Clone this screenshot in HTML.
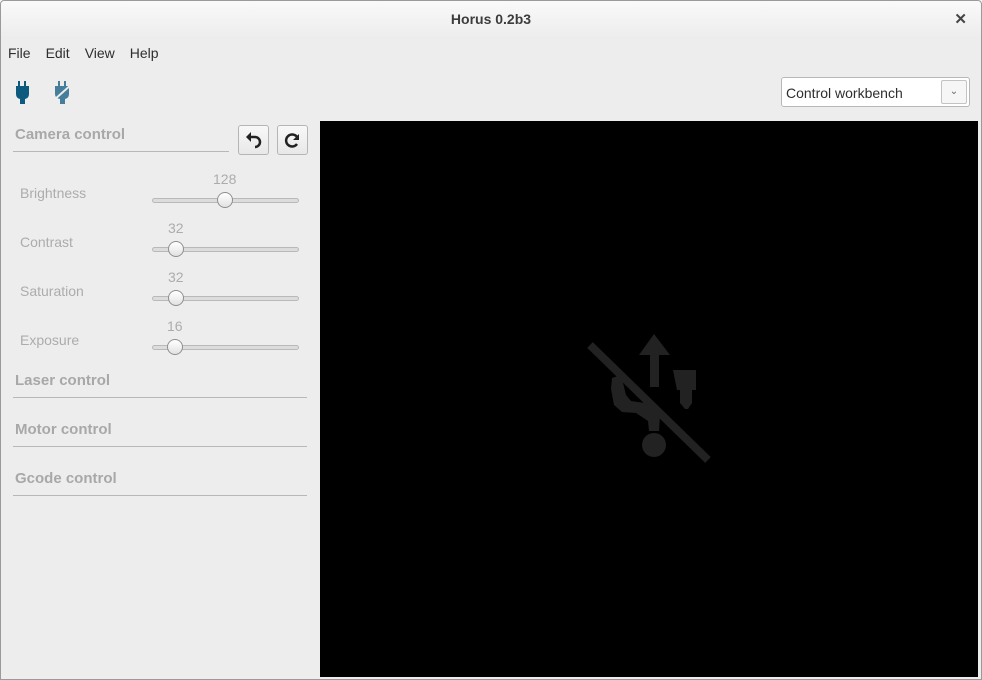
<!DOCTYPE html>
<html><head><style>
body{margin:0;width:982px;height:680px;overflow:hidden;background:#ededed;font-family:"Liberation Sans",sans-serif;}
.win{position:absolute;left:0;top:0;width:982px;height:680px;background:#ededed;}
.border{position:absolute;left:0;top:0;width:980px;height:678px;border:1px solid #9a9a9a;border-radius:4px 4px 0 0;pointer-events:none;}
.title{position:absolute;left:0;top:0;width:982px;height:39px;background:linear-gradient(#fafafa,#ececec);text-align:center;line-height:39px;font-size:14px;font-weight:bold;color:#3c3c3c;}
.close{position:absolute;right:15px;top:0;font-size:15px;color:#444;}
.menu{position:absolute;top:45px;left:8px;font-size:14px;color:#2e2e2e;}
.menu span{margin-right:15px;}
.hdr{position:absolute;left:15px;font-size:15px;font-weight:bold;color:#a8a8a8;}
.line{position:absolute;left:13px;height:1px;background:#b8b8b8;}
.lbl{position:absolute;left:20px;font-size:14px;color:#acacac;}
.val{position:absolute;font-size:14px;color:#acacac;}
.track{position:absolute;left:152px;width:145px;height:3px;border:1px solid #b9b9b9;border-radius:3px;background:#dcdcdc;}
.knob{position:absolute;width:14px;height:14px;border-radius:50%;border:1px solid #8f8f8f;background:linear-gradient(#fff,#e2e2e2);}
.btn{position:absolute;top:125px;width:29px;height:28px;border:1px solid #b5b5b5;border-radius:3px;background:linear-gradient(#f8f8f8,#e8e8e8);}
.view{position:absolute;left:320px;top:121px;width:658px;height:556px;background:#000;}
.combo{position:absolute;left:781px;top:77px;width:187px;height:28px;border:1px solid #b7b7b7;border-radius:3px;background:#fff;}
</style></head><body><div class="win">
<div class="title">Horus 0.2b3<span class="close">✕</span></div>
<div class="menu"><span>File</span><span>Edit</span><span>View</span><span>Help</span></div>
<svg style="position:absolute;left:14px;top:80px" width="66" height="26">
<g fill="#0d5a7f"><rect x="4" y="1" width="2" height="5"/><rect x="10" y="1" width="2" height="5"/><path d="M2 6h13v8q0 4-4 5v5h-5v-5q-4-1-4-5z"/></g>
<g fill="#0d5a7f" opacity=".75"><rect x="44" y="1" width="2" height="5"/><rect x="50" y="1" width="2" height="5"/><path d="M41 6h14v8q0 4-4 5v5h-5v-5q-5-1-5-5z"/></g>
<path d="M40 20L58 4" stroke="#ededed" stroke-width="2"/>
</svg>
<div class="combo"><span style="position:absolute;left:4px;top:7px;font-size:14px;color:#2e2e2e">Control workbench</span>
<div style="position:absolute;right:2px;top:2px;width:24px;height:22px;border:1px solid #c4c4c4;border-radius:2px;background:#f6f6f6;text-align:center;font-size:10px;line-height:22px;color:#666">⌄</div></div>
<div class="hdr" style="top:126px">Camera control</div><div class="line" style="top:151px;width:216px"></div>
<div class="btn" style="left:238px"><svg width="29" height="28"><path d="M10 11h6a5 5 0 0 1 0 10" stroke="#222" stroke-width="2.5" fill="none"/><path d="M7 11l5-5v10z" fill="#222"/></svg></div>
<div class="btn" style="left:277px"><svg width="29" height="28"><path d="M19 11a6 6 0 1 0 0 7" stroke="#222" stroke-width="2.5" fill="none"/><path d="M21 8v6h-6z" fill="#222"/></svg></div>
<div class="lbl" style="top:185px">Brightness</div><div class="val" style="left:213px;top:171px">128</div><div class="track" style="top:198px"></div><div class="knob" style="left:217px;top:192px"></div>
<div class="lbl" style="top:234px">Contrast</div><div class="val" style="left:168px;top:220px">32</div><div class="track" style="top:247px"></div><div class="knob" style="left:168px;top:241px"></div>
<div class="lbl" style="top:283px">Saturation</div><div class="val" style="left:168px;top:269px">32</div><div class="track" style="top:296px"></div><div class="knob" style="left:168px;top:290px"></div>
<div class="lbl" style="top:332px">Exposure</div><div class="val" style="left:167px;top:318px">16</div><div class="track" style="top:345px"></div><div class="knob" style="left:167px;top:339px"></div>
<div class="hdr" style="top:372px">Laser control</div><div class="line" style="top:397px;width:294px"></div>
<div class="hdr" style="top:421px">Motor control</div><div class="line" style="top:446px;width:294px"></div>
<div class="hdr" style="top:470px">Gcode control</div><div class="line" style="top:495px;width:294px"></div>
<div class="view"><svg width="658" height="556" style="position:absolute;left:0;top:0"><g transform="translate(-320,-121)" fill="#222">
<path d="M654 334l16 21h-11v32h-9v-32h-11z"/>
<path d="M673 370h23v20h-4v13l-4 6h-3l-5-6v-13h-3z"/>
<circle cx="654" cy="445" r="12"/>
<path d="M612 378l9-3 5 20 5 6 14 2 15 12-1 16h-10l-1-10-12-8-14-1-8-7-3-16z"/>
<path d="M590 345L708 460" stroke="#222" stroke-width="8"/>
</g></svg></div>
<div class="border"></div>
</div></body></html>
